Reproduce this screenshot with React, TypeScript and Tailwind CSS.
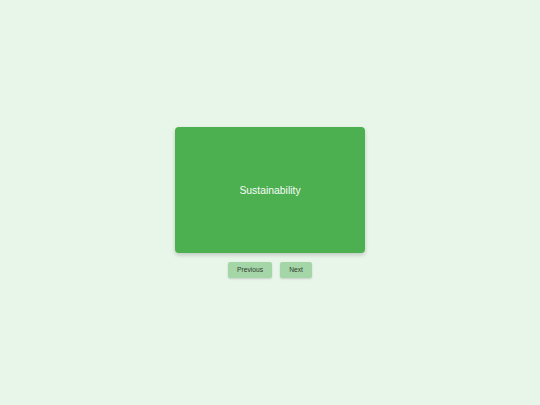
export default function App() {
  return (
    <div className="w-full h-[405px] bg-[#e8f5e9] flex flex-col items-center justify-center font-['Liberation_Sans',Arial,sans-serif]">
      {/* Flashcard */}
      <div className="w-[190px] h-[126px] rounded-[4px] bg-[#4caf50] shadow-[0_2px_4px_rgba(0,0,0,0.18)] flex items-center justify-center pt-[2px]">
        <span className="text-[10.4px] text-[#f7fbf7]">Sustainability</span>
      </div>

      {/* Navigation */}
      <div className="mt-[9px] flex gap-[8px]">
        <button className="h-[16px] px-[9px] rounded-[2px] bg-[#a5d6a7] text-[6.7px] text-[#2f3b30] shadow-[0_1px_2px_rgba(0,0,0,0.15)]">
          Previous
        </button>
        <button className="h-[16px] px-[9px] rounded-[2px] bg-[#a5d6a7] text-[6.7px] text-[#2f3b30] shadow-[0_1px_2px_rgba(0,0,0,0.15)]">
          Next
        </button>
      </div>
    </div>
  );
}
